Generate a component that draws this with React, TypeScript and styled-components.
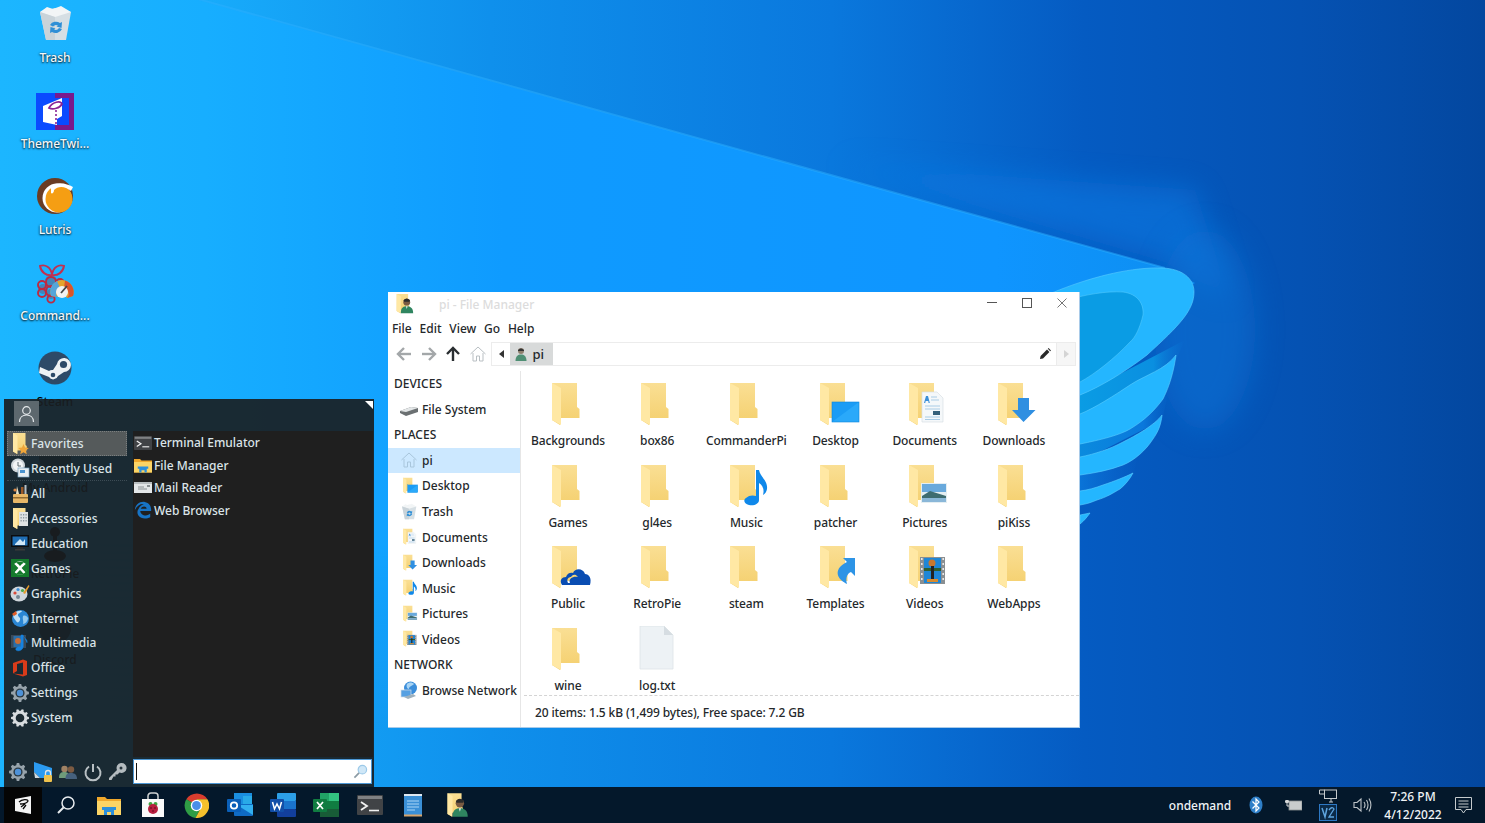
import React from "react";
import styled, { createGlobalStyle } from "styled-components";

const Global = createGlobalStyle`
  html, body { margin: 0; padding: 0; overflow: hidden; background: #0a6fd8; }
  * { box-sizing: border-box; }
  body { font-family: "Noto Sans", "Open Sans", sans-serif; }
`;

const Page = styled.div`
  position: relative;
  width: 1485px;
  height: 823px;
  display: flex;
  flex-direction: column;
  overflow: hidden;
  font-size: 12px;
  font-weight: 500;
`;
const WallpaperArt = styled.svg`
  position: absolute;
  left: 0;
  top: 0;
`;
const Desktop = styled.main`
  position: relative;
  flex: 1;
`;
const IconColumn = styled.div`
  position: absolute;
  left: 0;
  top: 0;
  width: 110px;
  display: flex;
  flex-direction: column;
`;
const DeskItem = styled.div`
  height: 86px;
  display: flex;
  flex-direction: column;
  align-items: center;
`;
const DeskIconBox = styled.div`
  width: 48px;
  height: 48px;
`;
const DeskLabel = styled.span<{ $under?: boolean }>`
  margin-top: 2px;
  line-height: 16px;
  color: ${(p) => (p.$under ? "#000" : "#f4f8fb")};
  text-shadow: ${(p) => (p.$under ? "none" : "0 1px 2px rgba(0,0,0,.85), 0 0 2px rgba(0,0,0,.5)")};
`;

/* Start menu */
const Menu = styled.aside`
  position: absolute;
  left: 4px;
  top: 399px;
  width: 370px;
  height: 388px;
  background: rgba(26, 30, 34, 0.92);
  display: flex;
  flex-direction: column;
  color: #dbe4e8;
`;
const MenuHeader = styled.header`
  height: 32px;
  padding: 2px 0 0 10px;
  position: relative;
`;
const Avatar = styled.div`
  width: 25px;
  height: 25px;
  background: #5d686e;
  display: flex;
  align-items: center;
  justify-content: center;
`;
const Corner = styled.div`
  position: absolute;
  right: 1px;
  top: 2px;
  width: 0;
  height: 0;
  border-top: 8px solid #fff;
  border-left: 8px solid transparent;
`;
const MenuBody = styled.div`
  height: 326px;
  display: flex;
`;
const Categories = styled.ul`
  width: 129px;
  margin: 0;
  padding: 0.4px 6px 0 3px;
  list-style: none;
`;
const Category = styled.li<{ $active?: boolean; $rule?: boolean }>`
  height: 24.9px;
  display: flex;
  align-items: center;
  gap: 1px;
  padding-left: 3px;
  background: ${(p) => (p.$active ? "#555a5b" : "transparent")};
  outline: ${(p) => (p.$active ? "1px dotted #7a7f80" : "none")};
  outline-offset: -1px;
  border-bottom: ${(p) => (p.$rule ? "1px dotted #3d4c55" : "none")};
  white-space: nowrap;
`;
const TileWrap = styled.span`
  display: flex;
  margin: 0 -3px 0 -1px;
`;
const Apps = styled.ul`
  flex: 1;
  margin: 0 1px 0 0;
  padding: 0.3px 0 0 1px;
  list-style: none;
  background: #1f1f1f;
`;
const AppRow = styled.li`
  height: 22.6px;
  display: flex;
  align-items: center;
  gap: 2px;
`;
const MenuFooter = styled.footer`
  height: 30px;
  display: flex;
  align-items: flex-start;
  padding-top: 2px;
`;
const QuickIcons = styled.div`
  width: 129px;
  height: 25px;
  display: flex;
  align-items: center;
  padding-left: 4px;
  gap: 4.2px;
`;
const SearchBox = styled.div`
  width: 239px;
  height: 25px;
  background: #fff;
  border: 1px solid #4d97d4;
  display: flex;
  align-items: center;
  justify-content: space-between;
  padding: 0 3px 0 2px;
`;
const Caret = styled.span`
  width: 1px;
  height: 17px;
  background: #111;
`;
const GhostShape = styled.svg`
  position: absolute;
  left: 0;
  top: 0;
  pointer-events: none;
`;

/* File manager */
const Win = styled.section`
  position: absolute;
  left: 388px;
  top: 292px;
  width: 692px;
  height: 436px;
  background: #fff;
  border-right: 1px solid #a9cbe9;
  border-bottom: 1px solid #a9cbe9;
  color: #24282b;
  display: flex;
  flex-direction: column;
`;
const TitleBar = styled.div`
  height: 25px;
  display: flex;
  align-items: center;
  padding: 0 0 1px 5px;
`;
const TitleText = styled.span`
  margin-left: 24px;
  flex: 1;
  color: #dcdcdc;
`;
const WinBtn = styled.button`
  width: 35px;
  height: 22px;
  margin-bottom: 2px;
  border: 0;
  padding: 0;
  background: none;
  display: flex;
  align-items: center;
  justify-content: center;
`;
const MenuBar = styled.nav`
  height: 22px;
  display: flex;
  align-items: center;
  padding-left: 4px;
  gap: 7.8px;
`;
const ToolBar = styled.div`
  height: 26px;
  margin-top: 2px;
  display: flex;
  align-items: center;
  padding-left: 4px;
`;
const ToolBtn = styled.div`
  width: 24.6px;
  display: flex;
  justify-content: center;
`;
const PathBar = styled.div`
  margin-left: 1px;
  width: 585px;
  height: 24px;
  border: 1px solid #ececec;
  display: flex;
  align-items: stretch;
`;
const PathBack = styled.div`
  width: 18px;
  display: flex;
  align-items: center;
  justify-content: center;
`;
const Crumb = styled.div`
  width: 43px;
  background: #d8dada;
  display: flex;
  align-items: center;
  gap: 4px;
  padding-left: 4px;
  font-size: 13px;
`;
const PathSpacer = styled.div`
  flex: 1;
`;
const PathEdit = styled.div`
  width: 22px;
  display: flex;
  align-items: center;
  justify-content: center;
`;
const PathNext = styled.div`
  width: 19px;
  background: #f6f6f6;
  border-left: 1px solid #ececec;
  display: flex;
  align-items: center;
  justify-content: center;
`;
const WinBody = styled.div`
  flex: 1;
  display: flex;
  min-height: 0;
  padding-top: 4px;
`;
const Sidebar = styled.div`
  width: 133px;
  border-right: 1px solid #e6e6e6;
`;
const SideHead = styled.div`
  height: 25.55px;
  display: flex;
  align-items: center;
  padding-left: 6px;
`;
const SideRow = styled.div<{ $active?: boolean }>`
  height: 25.55px;
  display: flex;
  align-items: center;
  gap: 4px;
  padding-left: 12px;
  background: ${(p) => (p.$active ? "#cce8ff" : "transparent")};
  white-space: nowrap;
`;
const SideTrash = styled.span`
  display: flex;
  margin: 0 -2px;
`;
const MainPane = styled.div`
  flex: 1;
  min-height: 0;
  display: flex;
  flex-direction: column;
`;
const FileGrid = styled.div`
  flex: 1;
  min-height: 0;
  display: grid;
  grid-template-columns: repeat(6, 89.2px);
  grid-auto-rows: 81.5px;
  padding: 10px 0 0 2.4px;
  letter-spacing: -0.12px;
`;
const FileCell = styled.div`
  display: flex;
  flex-direction: column;
  align-items: center;
`;
const FileName = styled.span`
  margin-top: 3px;
  line-height: 18px;
`;
const Status = styled.div`
  height: 32px;
  margin-left: 3px;
  border-top: 1px dashed #d4d4d4;
  display: flex;
  align-items: center;
  padding: 2px 0 0 11px;
  letter-spacing: -0.12px;
`;

/* Taskbar */
const TaskBar = styled.footer`
  position: relative;
  height: 36px;
  background: #04182b;
  display: flex;
  align-items: center;
  color: #f0f4f7;
`;
const StartBtn = styled.div`
  margin: 0 2.3px 0 4px;
  width: 38px;
  height: 36px;
  background: #050505;
  display: flex;
  align-items: center;
  justify-content: center;
`;
const TaskSlot = styled.div`
  width: 43.4px;
  display: flex;
  justify-content: center;
`;
const Tray = styled.div`
  margin-left: auto;
  margin-right: 3px;
  display: flex;
  align-items: center;
  height: 36px;
`;
const TrayCell = styled.div<{ $w: number }>`
  width: ${(p) => p.$w}px;
  display: flex;
  flex-direction: column;
  align-items: center;
  justify-content: center;
`;
const Clock = styled(TrayCell)`
  padding-top: 1.5px;
`;
const ClockLine = styled.span`
  line-height: 18px;
`;

/* ---------- drawings ---------- */
const gear = (cx: number, cy: number, ro: number, ri: number, n: number) => {
  const pts: string[] = [];
  for (let i = 0; i < n; i++) {
    const a = (i / n) * Math.PI * 2;
    const w = Math.PI / n / 2;
    [[ri, a - w * 1.3], [ro, a - w * 0.7], [ro, a + w * 0.7], [ri, a + w * 1.3]].forEach(([r, t]) =>
      pts.push(`${(cx + r * Math.cos(t)).toFixed(2)},${(cy + r * Math.sin(t)).toFixed(2)}`)
    );
  }
  return pts.join(" ");
};

type OverlayKind = "desktop" | "docs" | "down" | "music" | "pics" | "cloud" | "link" | "video" | "none" | "star" | "grid" | "user";

const FolderOverlay = ({ kind }: { kind: OverlayKind }) => {
  switch (kind) {
    case "desktop":
      return (<g><rect x="20" y="21" width="27" height="20" fill="#1b9cf5" /><path d="M20 41 L47 21 V41Z" fill="#2aa9fa" /><rect x="20" y="21" width="27" height="20" fill="none" stroke="#0f86db" strokeWidth=".6" /></g>);
    case "docs":
      return (<g><path d="M21 11 H36 L42 17 V41 H21Z" fill="#f5f8fa" stroke="#d8dfe4" strokeWidth=".7" /><path d="M25 15 l-2 7 h1.2l.5-2 h2.6l.3 2 h1.2 l-1.8-7z" fill="#3b8fd8" /><path d="M30 16 h6 M30 19 h8 M24 25 h15 M24 28 h15 M24 36 h15 M24 38.5 h15" stroke="#a9cce6" strokeWidth="1" /><rect x="32" y="30" width="7" height="4" fill="#35607a" /></g>);
    case "down":
      return <path d="M28 17 H39 V29 H45.5 L33.5 41 L22 29 H28Z" fill="#2f8fe1" />;
    case "music":
      return <path d="M34 7 H37 C38 14 46 17 45 26 C44.5 29 43 31 41 32 C43 25 39 21 37 20 V37 C37 41 32 43 27 42 C22 41 21 37 24 35 C27 32 31 32 34 33Z" fill="#0f88ea" />;
    case "pics":
      return (<g><rect x="20" y="20" width="26" height="20" fill="#e4eef2" /><rect x="21" y="21" width="24" height="8" fill="#69a9dc" /><path d="M21 33 L29 28 L45 33 V39 H21Z" fill="#3e6c70" /><rect x="21" y="35" width="24" height="4" fill="#8ab7d8" /></g>);
    case "cloud":
      return <path d="M18 41 C15 36 18 33 22 33 C23 29 27 28 29 29 C31 24 39 24 41 30 C45 30 48 34 46 41 Z M24 39 H26 C24 35 29 32 34 33 C31 29 28 31 27 33 C25 33 22 35 24 39Z" fill="#0a4db2" fillRule="evenodd" />;
    case "link":
      return <path d="M31 14 H43 V32 L39 28 C36 29 33 33 35 40 C27 36 22 29 29 22 C31 20 33 19 35 18Z" fill="#2d94e6" />;
    case "video":
      return (<g><rect x="19" y="13" width="25" height="27" fill="#8a8f92" /><path d="M20 14 h1.6 v2 h-1.6z M20 19 h1.6 v2 h-1.6z M20 24 h1.6 v2 h-1.6z M20 29 h1.6 v2 h-1.6z M20 34 h1.6 v2 h-1.6z M41.4 14 h1.6 v2 h-1.6z M41.4 19 h1.6 v2 h-1.6z M41.4 24 h1.6 v2 h-1.6z M41.4 29 h1.6 v2 h-1.6z M41.4 34 h1.6 v2 h-1.6z" fill="#e8e8e8" /><rect x="23" y="14" width="17" height="12" fill="#1e86d6" /><rect x="23" y="27" width="17" height="12" fill="#1e86d6" /><circle cx="31" cy="19" r="3.5" fill="#c9782c" /><rect x="23" y="24" width="17" height="3" fill="#2f5e2f" /><rect x="30" y="22" width="3" height="14" fill="#222" /><rect x="26" y="35" width="11" height="3" fill="#d98c2e" /></g>);
    case "star":
      return <path d="M29 24 l3 7 7.5 1-5.5 5 1.5 7.5-6.5-4-6.5 4 1.5-7.5-5.5-5 7.5-1z" fill="#f0a63a" />;
    case "grid":
      return (<g><rect x="20" y="10" width="18" height="28" fill="#dfe3e3" /><path d="M23 14 h2.5 v3 h-2.5z M28 14 h2.5 v3 h-2.5z M33 14 h2.5 v3 h-2.5z M23 20 h2.5 v3 h-2.5z M28 20 h2.5 v3 h-2.5z M33 20 h2.5 v3 h-2.5z M23 26 h2.5 v3 h-2.5z M28 26 h2.5 v3 h-2.5z M33 26 h2.5 v3 h-2.5z" fill="#8e9aa0" /></g>);
    case "user":
      return (<g><circle cx="30" cy="20" r="7.5" fill="#7a5a42" /><path d="M23 16 Q30 8 37 16 L36 19 H24Z" fill="#2b2b2b" /><path d="M17 44 C17 31 24 29 30 29 C37 29 44 32 44 44Z" fill="#2f8560" /><path d="M28 29 h4 l-2 6z" fill="#e8e8e8" /></g>);
    default:
      return null;
  }
};

const Folder = ({ size = 48, kind = "none" }: { size?: number; kind?: OverlayKind }) => {
  const id = React.useId();
  return (
    <svg width={size} height={size} viewBox="0 0 48 48" style={{ flexShrink: 0 }}>
      <defs>
        <linearGradient id={id} x1="0" y1="0" x2="0" y2="1">
          <stop offset="0" stopColor="#fadf94" />
          <stop offset="1" stopColor="#f4cf6d" />
        </linearGradient>
      </defs>
      <path d="M8 2 H33 V26 L35.5 28 V37 H16 V44 L8 39Z" fill={`url(#${id})`} />
      <path d="M8 2 L17 7 V44 L8 39Z" fill="#ffe8a4" />
      <FolderOverlay kind={kind} />
    </svg>
  );
};

const TextDoc = () => (
  <svg width="48" height="48" viewBox="0 0 48 48">
    <path d="M7 0 H31 L40 9 V43 H7Z" fill="#edf2f5" stroke="#dde3e7" strokeWidth=".8" />
    <path d="M31 0 V9 H40Z" fill="#d6dde2" />
  </svg>
);

const TrashArt = ({ size = 48 }: { size?: number }) => (
  <svg width={size} height={size} viewBox="0 0 48 48">
    <path d="M9 12 L24 8 L40 12 L35 40 H15Z" fill="#d6dfe4" />
    <path d="M9 12 L16 7 L22 9 L30 6 L40 12 L24 17Z" fill="#f2f5f6" />
    <path d="M15 40 L9 12 L24 17 V40Z" fill="#c9d3d9" />
    <path d="M19 25 a7 7 0 0 1 10-2 l2-1 -.5 6 -5-1.5 1.5-1 a4 4 0 0 0-5 1z M31 29 a7 7 0 0 1-10 3 l-2 1 .5-6 5 1.5 -1.5 1 a4 4 0 0 0 5-1.5z" fill="#2f8fd6" />
  </svg>
);
const ThemeArt = () => (
  <svg width="48" height="48" viewBox="0 0 48 48">
    <rect x="5" y="7" width="38" height="37" fill="#0a4bff" />
    <path d="M24 7 H43 V44 H24 V39 H38 V12 H24Z" fill="#7a1a8c" />
    <path d="M12 20 L31 12 V30 L26 33 V39 L12 36Z" fill="#fff" />
    <path d="M18 22 C21 16 30 14 31 18 C29 22 22 24 18 22Z" fill="none" stroke="#8a2496" strokeWidth="1.8" />
    <path d="M25 24 V40" stroke="#8a2496" strokeWidth="1.6" strokeDasharray="2 2" />
  </svg>
);
const LutrisArt = () => (
  <svg width="48" height="48" viewBox="0 0 48 48">
    <circle cx="24" cy="24" r="18" fill="#6a3c24" />
    <circle cx="26" cy="26" r="14.5" fill="#fff" />
    <circle cx="28" cy="27" r="13.5" fill="#f59e13" />
    <path d="M20 14 C28 9 36 12 42 15 L40 19 C34 14 27 14 23 18 C23 21 21 22 20 21Z" fill="#fff" />
  </svg>
);
const CommanderArt = () => (
  <svg width="48" height="48" viewBox="0 0 48 48">
    <g fill="#8a2f3d" opacity=".35">
      <circle cx="20" cy="23" r="6" /><circle cx="12" cy="31" r="5" /><circle cx="20" cy="36" r="5" />
    </g>
    <g fill="none" stroke="#bd2a42" strokeWidth="1.9">
      <circle cx="20" cy="24" r="5" /><circle cx="11" cy="27" r="4" /><circle cx="11" cy="35" r="4" />
      <circle cx="20" cy="33" r="5" /><circle cx="20" cy="41" r="3.6" /><circle cx="29" cy="25" r="4" />
    </g>
    <path d="M9 8 C14 6 20 9 21 17 C15 18 10 14 9 8Z M33 8 C28 6 22 9 21 17 C27 18 32 14 33 8Z" fill="none" stroke="#c23050" strokeWidth="1.9" />
    <path d="M20 38 A12 12 0 0 1 31 22 A12 12 0 0 1 42 38 L36 40 A6 6 0 0 0 26 39Z" fill="#e4a42c" />
    <path d="M34 22.5 A12 12 0 0 1 42 38 L36 40 A6 6 0 0 0 33 30Z" fill="#d9542b" />
    <path d="M20 38 A12 12 0 0 1 26 23 L29 30 A6 6 0 0 0 26 39Z" fill="#55a5d9" />
    <circle cx="31" cy="34" r="6" fill="#f2f2f2" /><path d="M30 35 L36 28" stroke="#444" strokeWidth="1.8" />
  </svg>
);
const SteamArt = () => (
  <svg width="48" height="48" viewBox="0 0 48 48">
    <circle cx="24" cy="24" r="16.5" fill="#2d4a68" />
    <path d="M8 29 L18 33 A5 5 0 0 0 27 32 L33 28 A7 7 0 1 0 26 20 L22 26 A5 5 0 0 0 18 27 L9 23Z" fill="#eef2f5" />
    <circle cx="32.5" cy="20.5" r="3.6" fill="#2d4a68" />
    <circle cx="22" cy="31" r="2.3" fill="#2d4a68" />
  </svg>
);

const FolderTile = ({ kind }: { kind: OverlayKind }) => (
  <TileWrap><Folder size={24} kind={kind} /></TileWrap>
);

const Icon20 = ({ children, w = 20, h = 20, vb = "0 0 20 20" }: { children: React.ReactNode; w?: number; h?: number; vb?: string }) => (
  <svg width={w} height={h} viewBox={vb} style={{ flexShrink: 0 }}>{children}</svg>
);

const RecentArt = () => (
  <Icon20>
    <circle cx="8" cy="7.5" r="7" fill="#cfd6da" /><circle cx="8" cy="7.5" r="5" fill="#f2f4f5" />
    <path d="M8 4 V8 H11" stroke="#5e6a70" fill="none" />
    <rect x="8" y="10" width="11" height="9" fill="#e8eef2" stroke="#7da7c7" strokeWidth=".7" />
    <rect x="10" y="12" width="5" height="3" fill="#4a93cf" />
  </Icon20>
);
const AllArt = () => (
  <Icon20>
    <rect x="3" y="10" width="15" height="9" rx="1" fill="#e8b868" />
    <rect x="3" y="13" width="15" height="1.5" fill="#8f6a30" />
    <path d="M7 2 l2 8 h-3z" fill="#e9e2c8" /><rect x="11" y="3" width="2.5" height="7" fill="#9a5a2a" />
    <rect x="14.5" y="1" width="2" height="9" fill="#b6bfc4" />
    <circle cx="5" cy="6" r="1.6" fill="#d84" />
  </Icon20>
);
const EducationArt = () => (
  <Icon20>
    <rect x="1" y="2" width="18" height="12" fill="#0c0c0c" />
    <rect x="2.5" y="3.5" width="15" height="9" fill="#1f6eb4" />
    <path d="M5 11 L10 6 L13 9 L15 6 V12H5Z" fill="#cfe6f5" />
    <rect x="7" y="14" width="6" height="2" fill="#2a2a2a" /><rect x="5" y="16" width="10" height="1.5" fill="#3a3a3a" />
  </Icon20>
);
const GamesArt = () => (
  <Icon20>
    <rect x="1" y="1" width="18" height="18" fill="#147a2c" />
    <circle cx="10" cy="10" r="6.8" fill="#fff" />
    <path d="M6 4.6 C8 6 9 7 10 8 C11 7 12 6 14 4.6 C12 3.4 8 3.4 6 4.6Z M4 6 C6 7.5 7.5 9 8.4 10 C6.5 12 5 14 4.3 14.5 C2.4 12 2.4 8.5 4 6Z M16 6 C14 7.5 12.5 9 11.6 10 C13.5 12 15 14 15.7 14.5 C17.6 12 17.6 8.5 16 6Z M10 12 C8.5 13.5 7 15 6 16 C8 17 12 17 14 16 C13 15 11.5 13.5 10 12Z" fill="#147a2c" />
  </Icon20>
);
const GraphicsArt = () => (
  <Icon20>
    <ellipse cx="9" cy="11" rx="8.5" ry="7.5" fill="#cfd6dc" />
    <circle cx="5" cy="10" r="1.6" fill="#d94a3a" /><circle cx="8" cy="6.5" r="1.6" fill="#3c8fd8" /><circle cx="12.5" cy="7.5" r="1.6" fill="#4ba94b" />
    <path d="M13 10 L18.5 2 L19.5 3 L15 11Z" fill="#e39a2d" />
    <circle cx="8" cy="14" r="2" fill="#778794" />
  </Icon20>
);
const GlobeArt = ({ size = 20 }: { size?: number }) => (
  <svg width={size} height={size} viewBox="0 0 20 20" style={{ flexShrink: 0 }}>
    <circle cx="10.5" cy="10.5" r="8.5" fill="#2a86d3" />
    <path d="M4 6 C6 3 9 2.5 12 3 C11 5 8 5 8 7 C8 9 11 9 10 12 C9 15 7 15 6 13 C5 11 3 10 3.3 8Z" fill="#bfe0f6" />
    <path d="M13 8 C15 7 17 8 18 10 C18 13 15 16 13 16 C14 13 12 11 13 8Z" fill="#93c9ee" />
    <path d="M2 6 l4-3 1 3 -3 2z" fill="#e25c26" />
  </svg>
);
const MediaArt = () => (
  <Icon20>
    <rect x="1" y="2" width="15" height="13" fill="#3a4a58" />
    <rect x="3.5" y="3" width="10" height="11" fill="#2b6ea8" />
    <circle cx="8" cy="8" r="3" fill="#c86d36" />
    <path d="M13 2 V14 C13 17 8 19 6 17 C5 15 8 13 11 14 V2Z M13 2 C14 6 18 6 17 10" fill="#1683df" stroke="#1683df" strokeWidth=".5" />
  </Icon20>
);
const OfficeArt = () => (
  <Icon20>
    <path d="M3 5 L13 1.5 L17 3 V17 L13 18.5 L3 15.5 L13 16.5 V4.5 L7 6 V13 L3 15.5Z" fill="#d83b1a" />
  </Icon20>
);
const GearBlue = ({ size = 20 }: { size?: number }) => (
  <svg width={size} height={size} viewBox="0 0 20 20" style={{ flexShrink: 0 }}>
    <polygon points={gear(10, 10, 9, 7, 8)} fill="#97a3ab" />
    <circle cx="10" cy="10" r="4.6" fill="#2b3a44" />
    <circle cx="10" cy="10" r="3.2" fill="#4e92d8" />
  </svg>
);
const GearWhite = () => (
  <Icon20>
    <polygon points={gear(10, 10, 9, 7.2, 10)} fill="#d8dcdf" />
    <circle cx="10" cy="10" r="4.3" fill="#1c2a32" />
  </Icon20>
);

const TerminalArt = ({ w = 18, h = 14 }: { w?: number; h?: number }) => (
  <svg width={w} height={h} viewBox="0 0 26 20" style={{ flexShrink: 0 }}>
    <rect width="26" height="20" rx="1" fill="#414346" />
    <rect x="1" y="1" width="24" height="3" fill="#7f8183" />
    <path d="M4 7 L10 11 L4 15" stroke="#f2f2f2" strokeWidth="1.8" fill="none" />
    <path d="M12 15.5 H22" stroke="#f2f2f2" strokeWidth="1.6" />
  </svg>
);
const ExplorerArt = ({ w = 18, h = 16 }: { w?: number; h?: number }) => (
  <svg width={w} height={h} viewBox="0 0 24 20" style={{ flexShrink: 0 }}>
    <path d="M0 2 H8 L10 4 H24 V20 H0Z" fill="#f0a82c" />
    <rect x="0" y="6" width="24" height="14" fill="#fbd466" />
    <path d="M7 20 V14 H17 V20 H14 V17 H10 V20Z" fill="#2b8fdc" />
    <rect x="5" y="12" width="14" height="3" fill="#2b8fdc" />
  </svg>
);
const MailArt = () => (
  <svg width="18" height="14" viewBox="0 0 18 14" style={{ flexShrink: 0 }}>
    <rect x="0" y="1" width="18" height="11" fill="#e4e7e8" />
    <rect x="0" y="1" width="18" height="2" fill="#b9bec0" />
    <path d="M4 6 h6 M4 8 h9" stroke="#8a9092" />
    <rect x="13" y="4" width="3" height="2" fill="#8a9092" />
  </svg>
);
const EdgeArt = () => (
  <svg width="18" height="18" viewBox="0 0 20 20" style={{ flexShrink: 0 }}>
    <path d="M1 10 C1 4 7 0 12 1 C17 2 19.5 6 19 11 H7 C7 14 10 16 13 16 C15 16 17 15 18 14 V18 C15 19.5 11 20 8 18.5 C4 17 2.5 12 5 9 C6 6 9 4 11 4 C9 2.5 4 4 1 10Z M7.5 8.5 H14 C14 5.5 9 5 7.5 8.5Z" fill="#1773c4" fillRule="evenodd" />
  </svg>
);
const UserOutline = () => (
  <svg width="17" height="18" viewBox="0 0 17 18" fill="none" stroke="#e6eaec" strokeWidth="1.2">
    <circle cx="8.5" cy="5.5" r="3.8" />
    <path d="M1.5 17 C1.5 12 5 10 8.5 10 C12 10 15.5 12 15.5 17" />
  </svg>
);
const Magnifier = ({ size = 15, color = "#9cc9e8", glass = "#cfe7f7" }: { size?: number; color?: string; glass?: string }) => (
  <svg width={size} height={size} viewBox="0 0 16 16" fill="none">
    <circle cx="10" cy="6" r="4.5" fill={glass} stroke={color} strokeWidth="1.3" />
    <path d="M6.5 9.5 L1.5 14.5" stroke={color === "#9cc9e8" ? "#8a9aa4" : color} strokeWidth="1.8" />
  </svg>
);
const MonitorLock = () => (
  <svg width="22" height="22" viewBox="0 0 22 22">
    <path d="M2 1 L20 7 V17 H8 L2 11Z" fill="#2b9af0" />
    <path d="M2 11 L8 17 H3Z" fill="#cfd8dc" />
    <rect x="12" y="14" width="8" height="7" rx="1" fill="#efc24d" />
    <path d="M13.5 14 V12 a2.5 2.5 0 0 1 5 0 V14" fill="none" stroke="#e2e4e4" strokeWidth="1.3" />
  </svg>
);
const PeopleArt = () => (
  <svg width="20" height="20" viewBox="0 0 20 20">
    <circle cx="6.5" cy="7" r="3.2" fill="#a08264" /><path d="M1 16 C1 11 3 10 6.5 10 C10 10 11 12 11 16Z" fill="#6f9b7a" />
    <circle cx="13" cy="7.5" r="3.2" fill="#7d5b42" /><path d="M7.5 17 C7.5 12 9.5 11 13 11 C17 11 19 13 19 17Z" fill="#46617d" />
  </svg>
);
const PowerArt = () => (
  <svg width="20" height="20" viewBox="0 0 20 20" fill="none" stroke="#b9c0c4" strokeWidth="2">
    <path d="M6 4.5 A7.5 7.5 0 1 0 14 4.5" /><path d="M10 2 V10" />
  </svg>
);
const KeyArt = () => (
  <svg width="20" height="20" viewBox="0 0 20 20">
    <path d="M2 16 L10 8 A5 5 0 1 1 12.5 10.5 L10.5 12.5 H8.5 V14.5 H6.5 L4.5 18 H2Z" fill="#b4bbbf" />
    <circle cx="14" cy="6" r="1.5" fill="#26343c" />
  </svg>
);

/* Window toolbar */
const ArrowIcon = ({ dir, color }: { dir: "left" | "right" | "up"; color: string }) => {
  const rot = dir === "left" ? 0 : dir === "right" ? 180 : 90;
  return (
    <svg width="16" height="16" viewBox="0 0 16 16" style={{ transform: `rotate(${rot}deg)` }} fill="none" stroke={color} strokeWidth="2.4">
      <path d="M15 8 H2" /><path d="M8 2 L2 8 L8 14" />
    </svg>
  );
};
const HomeOutline = ({ size = 18, color = "#b9bfc3" }: { size?: number; color?: string }) => (
  <svg width={size} height={size} viewBox="0 0 18 18" fill="none" stroke={color} strokeWidth="1" style={{ flexShrink: 0 }}>
    <path d="M1.5 9 L9 2 L16.5 9 M4 8 V16 H7.5 V11 H10.5 V16 H14 V8" />
  </svg>
);
const UserSmall = ({ size = 14 }: { size?: number }) => (
  <svg width={size} height={size} viewBox="0 0 14 14" style={{ flexShrink: 0 }}>
    <circle cx="7" cy="4" r="3" fill="#8f7f6e" />
    <path d="M4 3 Q7 0 10 3 L10 4 H4Z" fill="#333" />
    <path d="M1.5 14 C1.5 9 4 7.5 7 7.5 C10 7.5 12.5 9 12.5 14Z" fill="#4f8f74" />
  </svg>
);
const Pencil = () => (
  <svg width="12" height="12" viewBox="0 0 12 12">
    <path d="M1 11 L1.6 8 L8 1.6 L10.4 4 L4 10.4Z" fill="#2a2a2a" />
    <path d="M8.8 .8 L9.6 0 L12 2.4 L11.2 3.2Z" fill="#2a2a2a" />
  </svg>
);
const HddArt = () => (
  <svg width="18" height="18" viewBox="0 0 18 18" style={{ flexShrink: 0 }}>
    <path d="M0 11 L11 7 L18 8 V12 L6 16 L0 13Z" fill="#6b7072" />
    <path d="M0 11 L11 7 L18 8 L6 12Z" fill="#e4e7e8" />
  </svg>
);
const NetArt = () => (
  <svg width="18" height="18" viewBox="0 0 18 18" style={{ flexShrink: 0 }}>
    <circle cx="10.5" cy="7" r="6.5" fill="#3b8edb" />
    <path d="M7 3 C9 1 12 1 14 3 C12 5 9 5 9 8 C7 8 6 5 7 3Z" fill="#a8d4f4" />
    <rect x="1" y="9" width="10" height="7" fill="#56a0e2" stroke="#d3dde4" strokeWidth=".7" />
    <path d="M4 16 L13 13 L16 15 L8 18Z" fill="#9fb1bd" />
  </svg>
);

/* Taskbar art */
const StartArt = () => (
  <svg width="18" height="18" viewBox="0 0 18 18">
    <path d="M1 3 L17 0 V18 L1 15Z" fill="#f4f4f4" />
    <path d="M5 6 C8 3 14 3 14 5 C13 7 9 8 6 8 M11 8 L7 11 M12 9 L9 13" stroke="#0a0a0a" strokeWidth="1.3" fill="none" />
  </svg>
);
const BarMag = () => (
  <svg width="20" height="20" viewBox="0 0 20 20" fill="none" stroke="#e8ecef" strokeWidth="1.5">
    <circle cx="12" cy="8" r="6" /><path d="M7.5 12.5 L2 18" strokeWidth="2" />
  </svg>
);
const StoreArt = () => (
  <svg width="24" height="26" viewBox="0 0 24 26">
    <path d="M7 7 V4 A3 3 0 0 1 10 1 H14 A3 3 0 0 1 17 4 V7" fill="none" stroke="#cfd2d3" strokeWidth="1.5" />
    <rect x="1" y="7" width="22" height="18" fill="#fafafa" />
    <circle cx="9.5" cy="12" r="2" fill="#3fa340" /><circle cx="14.5" cy="12" r="2" fill="#3fa340" />
    <circle cx="12" cy="17" r="5" fill="#b81f3f" />
    <circle cx="10" cy="16" r="1" fill="#7e1029" /><circle cx="14" cy="16" r="1" fill="#7e1029" /><circle cx="12" cy="19" r="1" fill="#7e1029" />
  </svg>
);
const ChromeArt = () => (
  <svg width="25" height="25" viewBox="0 0 48 48">
    <path d="M24 24 L4.4 12 A24 24 0 0 1 45 12 H24Z" fill="#d93d2e" />
    <path d="M4.4 12 A24 24 0 0 0 22 47.9 L33 28 Z" fill="#2f9d45" />
    <path d="M45 12 A24 24 0 0 1 22 47.9 L33 28 L24 12Z" fill="#f5c02c" />
    <circle cx="24" cy="24" r="11" fill="#fff" />
    <circle cx="24" cy="24" r="8.5" fill="#4a8fe8" />
  </svg>
);
const OutlookArt = () => (
  <svg width="26" height="24" viewBox="0 0 26 24">
    <rect x="7" y="0" width="18" height="12" fill="#1a8ee0" />
    <rect x="16" y="3" width="9" height="8" fill="#29aae8" />
    <path d="M7 11 H26 V22 a1 1 0 0 1-1 1 H8 a1 1 0 0 1-1-1Z" fill="#0f6bc4" />
    <path d="M10 12 L26 22 V12Z" fill="#32b0f0" />
    <rect x="0" y="6" width="14" height="13" rx="1" fill="#0a5fb8" />
    <circle cx="7" cy="12.5" r="3.2" fill="none" stroke="#fff" strokeWidth="1.8" />
  </svg>
);
const WordArt = () => (
  <svg width="26" height="24" viewBox="0 0 26 24">
    <rect x="7" y="0" width="19" height="8" rx="1" fill="#2c9fe8" />
    <rect x="7" y="8" width="19" height="8" fill="#1a73cc" />
    <rect x="7" y="16" width="19" height="8" rx="1" fill="#123f9c" />
    <rect x="0" y="6" width="14" height="13" rx="1" fill="#124fa8" />
    <path d="M2.5 9 L4.5 16 L7 11 L9.5 16 L11.5 9" fill="none" stroke="#fff" strokeWidth="1.5" />
  </svg>
);
const ExcelArt = () => (
  <svg width="26" height="24" viewBox="0 0 26 24">
    <rect x="7" y="0" width="19" height="8" fill="#21a366" />
    <rect x="7" y="8" width="19" height="8" fill="#107c41" />
    <rect x="7" y="16" width="19" height="8" fill="#185c37" />
    <rect x="16" y="0" width="10" height="8" fill="#33c481" />
    <rect x="0" y="6" width="14" height="13" rx="1" fill="#107c41" />
    <path d="M4 9 L10 16 M10 9 L4 16" stroke="#fff" strokeWidth="1.7" />
  </svg>
);
const NotesArt = () => (
  <svg width="20" height="24" viewBox="0 0 20 24">
    <rect x="1" y="1" width="18" height="22" fill="#3a8fd6" />
    <rect x="1" y="1" width="18" height="2" fill="#dfe9f2" />
    <rect x="1" y="21.5" width="18" height="2" fill="#d8a46a" />
    <path d="M4 8 H16 M4 11 H16 M4 14 H16 M4 17 H12" stroke="#a9d5f5" strokeWidth="1.1" />
  </svg>
);
const FolderUserBar = () => <Folder size={27} kind="user" />;

const BluetoothArt = () => (
  <svg width="14" height="18" viewBox="0 0 14 18">
    <ellipse cx="7" cy="9" rx="6.5" ry="8.5" fill="#2f7fc8" />
    <path d="M3.5 5.5 L10 12 L7 15 V3 L10 6 L3.5 12.5" fill="none" stroke="#fff" strokeWidth="1.2" />
  </svg>
);
const BatteryArt = () => (
  <svg width="18" height="14" viewBox="0 0 18 14">
    <rect x="5" y="3" width="13" height="9" fill="#c9cccd" />
    <rect x="5" y="3" width="13" height="9" fill="none" stroke="#8f9395" strokeWidth=".8" />
    <rect x="1" y="2" width="4" height="3" rx="1.2" fill="#d5d7d8" /><path d="M3 5 V8 H5" stroke="#d5d7d8" fill="none" />
  </svg>
);
const MonitorNet = () => (
  <svg width="18" height="15" viewBox="0 0 18 15" fill="none" stroke="#c5cacd" strokeWidth="1">
    <rect x="5.5" y="1" width="12" height="8.5" /><path d="M.5 1 H5.5 V5 H.5Z M10 13 H14 M12 9.5 V13" />
  </svg>
);
const V2Art = () => (
  <svg width="18" height="17" viewBox="0 0 18 17">
    <rect x=".5" y=".5" width="17" height="16" fill="#0b2a48" stroke="#2c78c4" />
    <path d="M3 4 L6 13 L8 4" fill="none" stroke="#5fa6e0" strokeWidth="1.5" />
    <path d="M10 6 Q13 2 15 5 L10 13 H15" fill="none" stroke="#5fa6e0" strokeWidth="1.3" />
  </svg>
);
const VolumeArt = () => (
  <svg width="19" height="16" viewBox="0 0 19 16" fill="none" stroke="#bcc2c6" strokeWidth="1.1">
    <path d="M1 5.5 H4 L8 2 V14 L4 10.5 H1Z" /><path d="M11 5 Q13 8 11 11 M13.5 3 Q16.5 8 13.5 13 M16 1.5 Q19.8 8 16 14.5" />
  </svg>
);
const NotifArt = () => (
  <svg width="17" height="17" viewBox="0 0 17 17" fill="none" stroke="#c5cacd" strokeWidth="1">
    <path d="M.5 .5 H16.5 V12.5 H11 L8.5 16 L6 12.5 H.5Z" /><path d="M3.5 4 H13.5 M3.5 7 H13.5 M3.5 10 H13.5" />
  </svg>
);

const WindowIconArt = () => <Folder size={22} kind="user" />;

const Wallpaper = () => (
  <WallpaperArt width="1485" height="823" viewBox="0 0 1485 823">
    <defs>
      <linearGradient id="base" gradientUnits="userSpaceOnUse" x1="0" y1="0" x2="1485" y2="0">
        <stop offset="0" stopColor="#1cb4ff" />
        <stop offset=".135" stopColor="#18acfb" />
        <stop offset=".33" stopColor="#0f90ec" />
        <stop offset=".56" stopColor="#0a78dd" />
        <stop offset=".73" stopColor="#055bc2" />
        <stop offset=".875" stopColor="#0552b3" />
        <stop offset="1" stopColor="#03479f" />
      </linearGradient>
      <linearGradient id="bright" gradientUnits="userSpaceOnUse" x1="0" y1="0" x2="1200" y2="0">
        <stop offset="0" stopColor="#1cb6ff" />
        <stop offset=".17" stopColor="#17aeff" />
        <stop offset=".42" stopColor="#0f9bff" />
        <stop offset=".83" stopColor="#0f95ff" />
        <stop offset="1" stopColor="#0d8ef0" />
      </linearGradient>
      <linearGradient id="fadeY" gradientUnits="userSpaceOnUse" x1="0" y1="540" x2="0" y2="730">
        <stop offset="0" stopColor="#fff" />
        <stop offset="1" stopColor="#000" />
      </linearGradient>
      <mask id="fadeMask" maskUnits="userSpaceOnUse" x="0" y="0" width="1485" height="823">
        <rect width="1485" height="823" fill="url(#fadeY)" />
      </mask>
      <linearGradient id="band1" gradientUnits="userSpaceOnUse" x1="1080" y1="0" x2="1185" y2="0">
        <stop offset="0" stopColor="#0a9ce4" />
        <stop offset=".7" stopColor="#0a8fe0" />
        <stop offset="1" stopColor="#0a78d8" stopOpacity="0" />
      </linearGradient>
      <linearGradient id="band2" gradientUnits="userSpaceOnUse" x1="1080" y1="0" x2="1170" y2="0">
        <stop offset="0" stopColor="#0b8bde" />
        <stop offset=".7" stopColor="#0a78dc" />
        <stop offset="1" stopColor="#0a6cd0" stopOpacity="0" />
      </linearGradient>
      <linearGradient id="band3" gradientUnits="userSpaceOnUse" x1="1080" y1="0" x2="1140" y2="0">
        <stop offset="0" stopColor="#0a74d8" />
        <stop offset="1" stopColor="#0a68d0" stopOpacity="0" />
      </linearGradient>
      <filter id="soft" x="-50%" y="-50%" width="200%" height="200%">
        <feGaussianBlur stdDeviation="14" />
      </filter>
    </defs>
    <rect width="1485" height="823" fill="url(#base)" />
    <path d="M840 165 L1165 262 L1230 300 L1195 190Z" fill="#0d7fe8" opacity=".5" filter="url(#soft)" />
    <ellipse cx="1205" cy="330" rx="50" ry="100" fill="#0d74d8" opacity=".5" filter="url(#soft)" />
    <path d="M0 0 H198 L1165 268 L1195 283 L1090 340 L1060 800 L0 800Z" fill="url(#bright)" mask="url(#fadeMask)" />
    <path d="M198 -1 L1165 268" stroke="#2bb0ff" strokeWidth="2" opacity=".5" fill="none" />
    <path d="M1000 395 H1080 L1185 340 L1176 360 L1080 420 L1000 440Z" fill="url(#band1)" />
    <path d="M1000 440 L1080 440 L1168 395 L1162 420 L1080 462 L1000 470Z" fill="url(#band2)" />
    <path d="M1000 470 L1080 472 L1140 445 L1133 478 L1080 495 L1000 500Z" fill="url(#band3)" />
    <g stroke="#5ccfff" strokeWidth=".6" fill="#24b6ff">
      <path d="M1000 320 C1020 305 1100 266 1163 268 C1182 269 1194 278 1194 292 C1194 310 1180 325 1147 355 C1125 372 1100 387 1080 395 L1000 430Z" />
      <path d="M1176 355 C1165 370 1145 375 1130 385 C1115 395 1095 408 1080 414 L1000 440 V460 L1080 444 C1100 440 1120 435 1130 429 C1145 420 1155 410 1163 399 C1170 385 1174 370 1176 355Z" />
      <path d="M1162 415 C1155 425 1135 436 1123 442 C1110 449 1095 454 1080 457 L1000 470 V490 L1080 475 C1095 473 1110 470 1123 465 C1135 460 1146 450 1153 439 C1158 432 1161 425 1162 415Z" />
      <path d="M1133 473 C1125 477 1115 481 1103 485 C1095 488 1088 490 1080 491 L1000 500 V515 L1080 505 C1087 504 1092 502 1097 500 C1107 497 1113 493 1120 489 C1125 485 1130 479 1133 473Z" />
      <path d="M1090 513 L1080 515 V524 C1084 521 1087 517 1090 513Z" />
    </g>
    <path d="M1000 330 C1040 305 1090 290 1123 292 C1138 294 1144 304 1143 315 C1140 328 1135 338 1130 342 C1115 358 1095 374 1080 382 L1000 410Z" fill="#0a9ce4" stroke="#5ccfff" strokeWidth=".5" />
  </WallpaperArt>
);

const categories: { label: string; icon: React.ReactNode; active?: boolean; rule?: boolean }[] = [
  { label: "Favorites", icon: <FolderTile kind="star" />, active: true },
  { label: "Recently Used", icon: <RecentArt />, rule: true },
  { label: "All", icon: <AllArt /> },
  { label: "Accessories", icon: <FolderTile kind="grid" /> },
  { label: "Education", icon: <EducationArt /> },
  { label: "Games", icon: <GamesArt /> },
  { label: "Graphics", icon: <GraphicsArt /> },
  { label: "Internet", icon: <GlobeArt /> },
  { label: "Multimedia", icon: <MediaArt /> },
  { label: "Office", icon: <OfficeArt /> },
  { label: "Settings", icon: <GearBlue /> },
  { label: "System", icon: <GearWhite /> },
];
const apps = [
  { label: "Terminal Emulator", icon: <TerminalArt /> },
  { label: "File Manager", icon: <ExplorerArt /> },
  { label: "Mail Reader", icon: <MailArt /> },
  { label: "Web Browser", icon: <EdgeArt /> },
];
const places2: { label: string; kind: OverlayKind }[] = [
  { label: "Documents", kind: "docs" },
  { label: "Downloads", kind: "down" },
  { label: "Music", kind: "music" },
  { label: "Pictures", kind: "pics" },
  { label: "Videos", kind: "video" },
];
const files: { name: string; kind?: OverlayKind; doc?: boolean }[] = [
  { name: "Backgrounds" }, { name: "box86" }, { name: "CommanderPi" },
  { name: "Desktop", kind: "desktop" }, { name: "Documents", kind: "docs" }, { name: "Downloads", kind: "down" },
  { name: "Games" }, { name: "gl4es" }, { name: "Music", kind: "music" },
  { name: "patcher" }, { name: "Pictures", kind: "pics" }, { name: "piKiss" },
  { name: "Public", kind: "cloud" }, { name: "RetroPie" }, { name: "steam" },
  { name: "Templates", kind: "link" }, { name: "Videos", kind: "video" }, { name: "WebApps" },
  { name: "wine" }, { name: "log.txt", doc: true },
];
const desk: { label: string; art?: React.ReactNode; under?: boolean }[] = [
  { label: "Trash", art: <TrashArt /> },
  { label: "ThemeTwi...", art: <ThemeArt /> },
  { label: "Lutris", art: <LutrisArt /> },
  { label: "Command...", art: <CommanderArt /> },
  { label: "Steam", art: <SteamArt />, under: true },
  { label: "My Android", under: true },
  { label: "RetroPie", under: true },
  { label: "Discord", under: true },
];

export default function App() {
  return (
    <Page>
      <Global />
      <Wallpaper />
      <Desktop>
        <IconColumn>
          {desk.map((d) => (
            <DeskItem key={d.label}>
              <DeskIconBox>{d.art}</DeskIconBox>
              <DeskLabel $under={d.under}>{d.label}</DeskLabel>
            </DeskItem>
          ))}
        </IconColumn>
        <GhostShape width="110" height="660" viewBox="0 0 110 660">
          <circle cx="55" cy="458" r="16" fill="#000" opacity=".5" />
          <circle cx="55" cy="532" r="5" fill="#000" />
          <rect x="53" y="534" width="4" height="18" fill="#000" />
          <ellipse cx="55" cy="556" rx="11" ry="6" fill="#000" />
          <circle cx="55" cy="628" r="16" fill="#000" opacity=".6" />
        </GhostShape>
        <Menu>
          <MenuHeader>
            <Avatar><UserOutline /></Avatar>
            <Corner />
          </MenuHeader>
          <MenuBody>
            <Categories>
              {categories.map((c) => (
                <Category key={c.label} $active={c.active} $rule={c.rule}>
                  {c.icon}
                  {c.label}
                </Category>
              ))}
            </Categories>
            <Apps>
              {apps.map((a) => (
                <AppRow key={a.label}>
                  {a.icon}
                  {a.label}
                </AppRow>
              ))}
            </Apps>
          </MenuBody>
          <MenuFooter>
            <QuickIcons>
              <GearBlue />
              <MonitorLock />
              <PeopleArt />
              <PowerArt />
              <KeyArt />
            </QuickIcons>
            <SearchBox>
              <Caret />
              <Magnifier />
            </SearchBox>
          </MenuFooter>
        </Menu>
        <Win>
          <TitleBar>
            <WindowIconArt />
            <TitleText>pi - File Manager</TitleText>
            <WinBtn>
              <svg width="10" height="10" viewBox="0 0 10 10"><path d="M0 4.5 H10" stroke="#555" /></svg>
            </WinBtn>
            <WinBtn>
              <svg width="10" height="10" viewBox="0 0 10 10"><rect x=".5" y=".5" width="9" height="9" fill="none" stroke="#555" /></svg>
            </WinBtn>
            <WinBtn>
              <svg width="10" height="10" viewBox="0 0 10 10"><path d="M.5 .5 L9.5 9.5 M9.5 .5 L.5 9.5" stroke="#777" /></svg>
            </WinBtn>
          </TitleBar>
          <MenuBar>
            <span>File</span><span>Edit</span><span>View</span><span>Go</span><span>Help</span>
          </MenuBar>
          <ToolBar>
            <ToolBtn><ArrowIcon dir="left" color="#a3a7a9" /></ToolBtn>
            <ToolBtn><ArrowIcon dir="right" color="#a3a7a9" /></ToolBtn>
            <ToolBtn><ArrowIcon dir="up" color="#2a2e31" /></ToolBtn>
            <ToolBtn><HomeOutline /></ToolBtn>
            <PathBar>
              <PathBack>
                <svg width="5" height="8" viewBox="0 0 5 8"><path d="M5 0 V8 L0 4Z" fill="#333" /></svg>
              </PathBack>
              <Crumb><UserSmall />pi</Crumb>
              <PathSpacer />
              <PathEdit><Pencil /></PathEdit>
              <PathNext>
                <svg width="5" height="8" viewBox="0 0 5 8"><path d="M0 0 V8 L5 4Z" fill="#d4d4d4" /></svg>
              </PathNext>
            </PathBar>
          </ToolBar>
          <WinBody>
            <Sidebar>
              <SideHead>DEVICES</SideHead>
              <SideRow><HddArt />File System</SideRow>
              <SideHead>PLACES</SideHead>
              <SideRow $active><HomeOutline color="#a9c6dc" />pi</SideRow>
              <SideRow><Folder size={18} kind="desktop" />Desktop</SideRow>
              <SideRow><SideTrash><TrashArt size={22} /></SideTrash>Trash</SideRow>
              {places2.map((p) => (
                <SideRow key={p.label}><Folder size={18} kind={p.kind} />{p.label}</SideRow>
              ))}
              <SideHead>NETWORK</SideHead>
              <SideRow><NetArt />Browse Network</SideRow>
            </Sidebar>
            <MainPane>
              <FileGrid>
                {files.map((f) => (
                  <FileCell key={f.name}>
                    {f.doc ? <TextDoc /> : <Folder kind={f.kind} />}
                    <FileName>{f.name}</FileName>
                  </FileCell>
                ))}
              </FileGrid>
              <Status>20 items: 1.5 kB (1,499 bytes), Free space: 7.2 GB</Status>
            </MainPane>
          </WinBody>
        </Win>
      </Desktop>
      <TaskBar>
        <StartBtn><StartArt /></StartBtn>
        <TaskSlot><BarMag /></TaskSlot>
        <TaskSlot><ExplorerArt w={24} h={20} /></TaskSlot>
        <TaskSlot><StoreArt /></TaskSlot>
        <TaskSlot><ChromeArt /></TaskSlot>
        <TaskSlot><OutlookArt /></TaskSlot>
        <TaskSlot><WordArt /></TaskSlot>
        <TaskSlot><ExcelArt /></TaskSlot>
        <TaskSlot><TerminalArt w={26} h={20} /></TaskSlot>
        <TaskSlot><NotesArt /></TaskSlot>
        <TaskSlot><FolderUserBar /></TaskSlot>
        <Tray>
          <TrayCell $w={80}>ondemand</TrayCell>
          <TrayCell $w={32}><BluetoothArt /></TrayCell>
          <TrayCell $w={42}><BatteryArt /></TrayCell>
          <TrayCell $w={28}><MonitorNet /><V2Art /></TrayCell>
          <TrayCell $w={40}><VolumeArt /></TrayCell>
          <Clock $w={62}><ClockLine>7:26 PM</ClockLine><ClockLine>4/12/2022</ClockLine></Clock>
          <TrayCell $w={38}><NotifArt /></TrayCell>
        </Tray>
      </TaskBar>
    </Page>
  );
}
